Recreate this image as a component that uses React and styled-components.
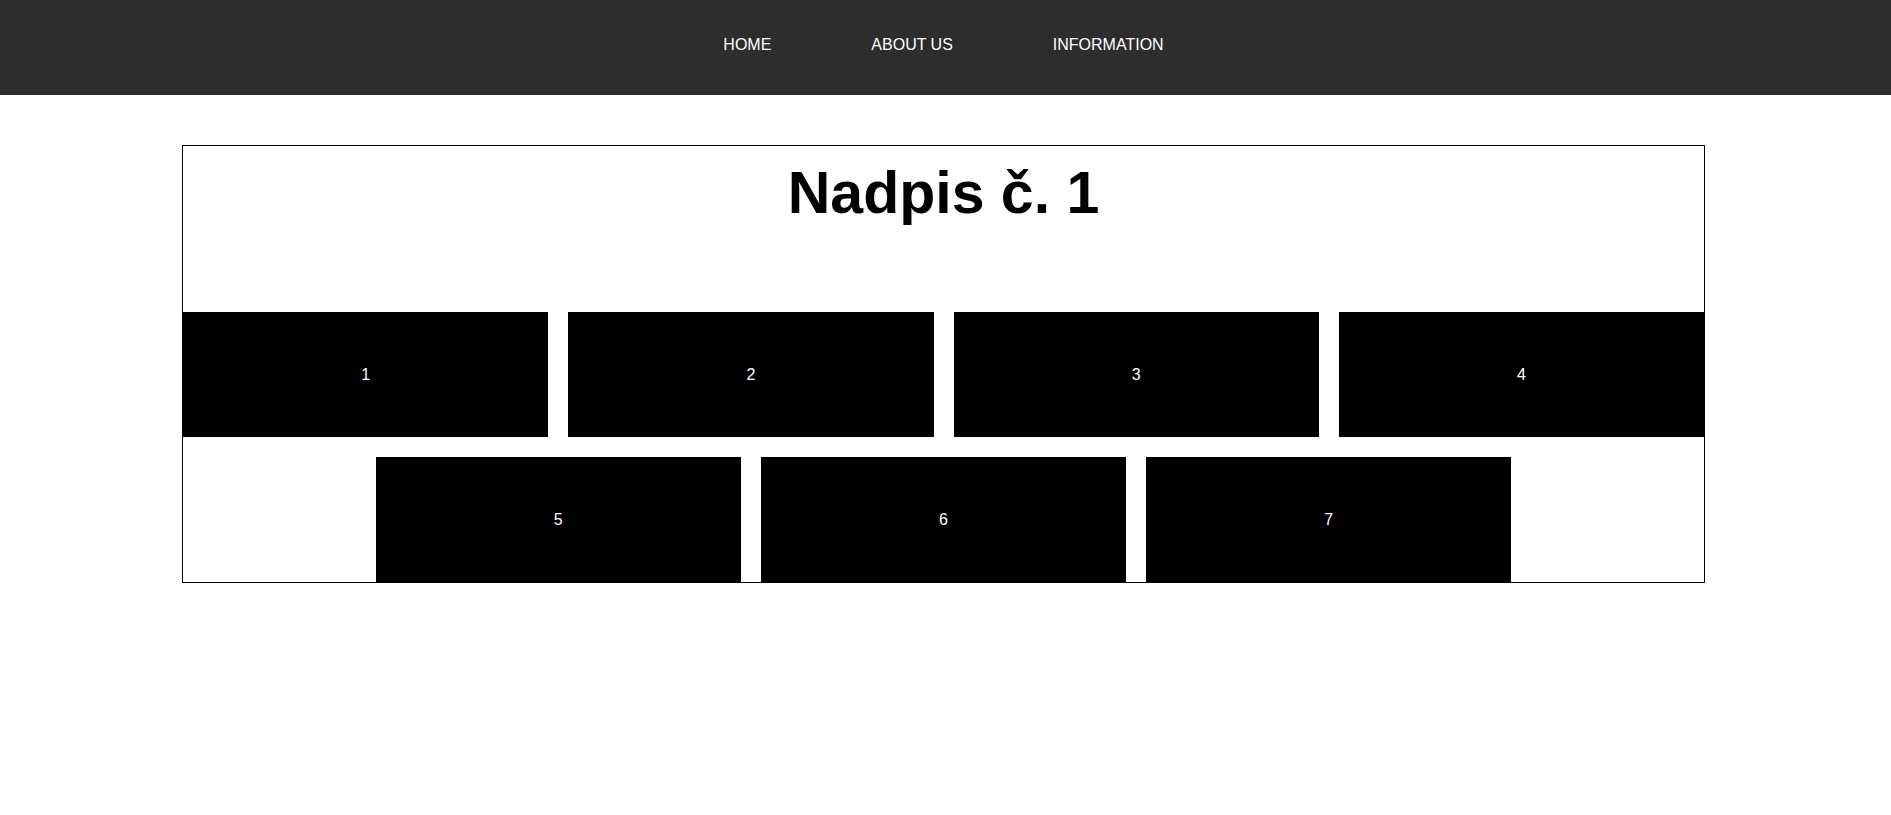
import React from 'react';
import styled, {createGlobalStyle} from 'styled-components';

const links = ['HOME', 'ABOUT US', 'INFORMATION'];
const boxes = [1, 2, 3, 4, 5, 6, 7];

const GlobalStyle = createGlobalStyle`
    body {
        margin: 0;
        background: #ffffff;
        font-family: "Liberation Sans", Arial, sans-serif;
    }
`;

export default function App() {
    return (
        <>
            <GlobalStyle />
            <Nav>
                <Menu>
                    {links.map((link) => (
                        <MenuItem key={link}>{link}</MenuItem>
                    ))}
                </Menu>
            </Nav>
            <Main>
                <Title>Nadpis č. 1</Title>
                <Grid>
                    {boxes.map((n) => (
                        <Box key={n}>{n}</Box>
                    ))}
                </Grid>
            </Main>
        </>
    );
}

const Nav = styled.nav`
    height: 95px;
    background-color: #2d2d2d;
    box-sizing: border-box;
    padding-top: 36px;
`;

const Menu = styled.ul`
    list-style: none;
    margin: 0;
    padding: 0;
    display: flex;
    justify-content: center;
    gap: 100px;
    transform: translateX(-2px);
`;

const MenuItem = styled.li`
    color: #ffffff;
    font-size: 16px;
    line-height: 18px;
`;

const Main = styled.main`
    width: 1521px;
    margin: 50px 0 0 182px;
    border: 1px solid #000000;
`;

const Title = styled.h1`
    margin: 14px 0 0;
    height: 152px;
    text-align: center;
    font-size: 59px;
    font-weight: bold;
    line-height: 67px;
    color: #000000;
`;

const Grid = styled.div`
    display: flex;
    flex-wrap: wrap;
    justify-content: center;
    gap: 20px;
`;

const Box = styled.div`
    width: calc((100% - 60px) / 4);
    height: 125px;
    background-color: #000000;
    color: #ffffff;
    font-size: 16px;
    display: flex;
    align-items: center;
    justify-content: center;
`;
